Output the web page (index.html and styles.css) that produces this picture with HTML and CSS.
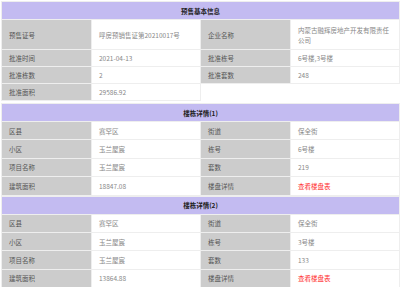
FILE: index.html
```html
<!DOCTYPE html>
<html lang="zh">
<head>
<meta charset="utf-8">
<link rel="stylesheet" href="styles.css">
</head>
<body>
<table class="sec sec-first">
  <colgroup><col class="c-lab"><col class="c-val"><col class="c-lab"><col class="c-val"></colgroup>
  <tr><th colspan="4">预售基本信息</th></tr>
  <tr class="tall"><td class="lab">预售证号</td><td class="val">呼房预销售证第20210017号</td><td class="lab">企业名称</td><td class="val">内蒙古融辉房地产开发有限责任公司</td></tr>
  <tr><td class="lab">批准时间</td><td class="val">2021-04-13</td><td class="lab">批准栋号</td><td class="val">6号楼,3号楼</td></tr>
  <tr><td class="lab">批准栋数</td><td class="val">2</td><td class="lab">批准套数</td><td class="val">248</td></tr>
  <tr><td class="lab">批准面积</td><td class="val">29586.92</td></tr>
</table>
<table class="sec sec-second">
  <colgroup><col class="c-lab"><col class="c-val"><col class="c-lab"><col class="c-val"></colgroup>
  <tr><th colspan="4">楼栋详情(1)</th></tr>
  <tr><td class="lab">区县</td><td class="val">赛罕区</td><td class="lab">街道</td><td class="val">保全街</td></tr>
  <tr><td class="lab">小区</td><td class="val">玉兰屋宸</td><td class="lab">栋号</td><td class="val">6号楼</td></tr>
  <tr><td class="lab">项目名称</td><td class="val">玉兰屋宸</td><td class="lab">套数</td><td class="val">219</td></tr>
  <tr><td class="lab">建筑面积</td><td class="val">18847.08</td><td class="lab">楼盘详情</td><td class="val"><a class="link" href="#">查看楼盘表</a></td></tr>
</table>
<table class="sec sec-third">
  <colgroup><col class="c-lab"><col class="c-val"><col class="c-lab"><col class="c-val"></colgroup>
  <tr><th colspan="4">楼栋详情(2)</th></tr>
  <tr><td class="lab">区县</td><td class="val">赛罕区</td><td class="lab">街道</td><td class="val">保全街</td></tr>
  <tr><td class="lab">小区</td><td class="val">玉兰屋宸</td><td class="lab">栋号</td><td class="val">3号楼</td></tr>
  <tr><td class="lab">项目名称</td><td class="val">玉兰屋宸</td><td class="lab">套数</td><td class="val">133</td></tr>
  <tr><td class="lab">建筑面积</td><td class="val">13864.88</td><td class="lab">楼盘详情</td><td class="val"><a class="link" href="#">查看楼盘表</a></td></tr>
</table>
</body>
</html>
```
FILE: styles.css
```css
html, body {
  margin: 0;
  padding: 0;
  background: #fff;
}
body {
  font-family: "Noto Sans CJK SC", "Noto Sans", sans-serif;
  font-size: 6.5px;
  line-height: 10px;
}
.sec {
  width: 398px;
  margin-left: 1px;
  border-collapse: collapse;
  table-layout: fixed;
}
.sec-first { margin-top: 1px; }
.sec-second { margin-top: 2px; }
.sec-third { margin-top: 0; }
.c-lab { width: 90px; }
.c-val { width: 109px; }
.sec th {
  height: 17px;
  padding: 0;
  background: #c3bbf1;
  color: #222;
  font-weight: bold;
  text-align: center;
  border: 1px solid #eeeeee;
}
.sec td {
  height: 16px;
  padding: 0 7px;
  border: 1px solid #eeeeee;
  vertical-align: middle;
}
.sec-second td, .sec-third td { height: 17.4px; }
.sec tr.tall td { height: 29px; }
.lab {
  background: #cccccc;
  color: #555;
}
.val {
  background: #fff;
  color: #888;
}
.link {
  color: #ff2f2f;
  text-decoration: none;
}
```
